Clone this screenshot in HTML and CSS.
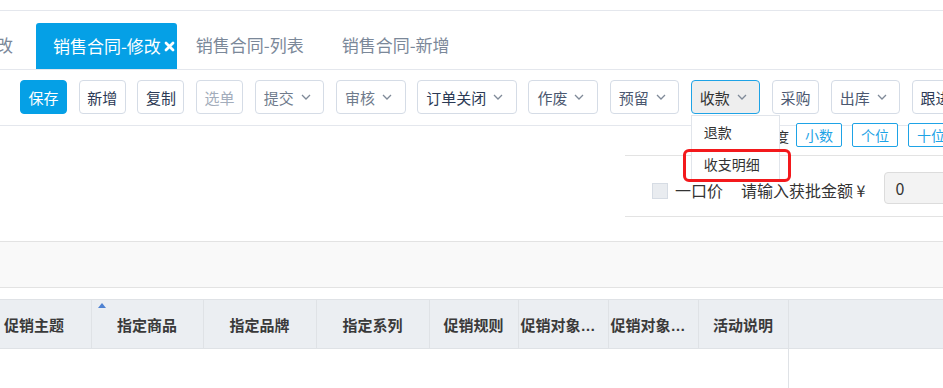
FILE: index.html
```html
<!DOCTYPE html>
<html>

<head>
  <title>销售合同-修改</title>
  <meta name="viewport" content="width=device-width, initial-scale=1">
  <link rel="stylesheet" href="styles.css">
</head>

<body>
  <div class="top-strip"></div>

  <div class="tabbar">
    <div class="tab tab-cut">销售合同-修改</div>
    <div class="tab active">销售合同-修改
      <svg class="tab-close" width="11" height="11" viewBox="0 0 11 11">
        <path d="M2 2L9 9M9 2L2 9" stroke="#fff" stroke-width="2.8" stroke-linecap="round" />
      </svg>
    </div>
    <div class="tab">销售合同-列表</div>
    <div class="tab">销售合同-新增</div>
  </div>

  <div class="toolbar">
    <button class="btn primary">保存</button>
    <button class="btn">新增</button>
    <button class="btn">复制</button>
    <button class="btn disabled">选单</button>
    <button class="btn drop muted">提交 <svg class="chev" width="10" height="6" viewBox="0 0 10 6"><path d="M1 1L5 5L9 1" /></svg></button>
    <button class="btn drop muted">审核 <svg class="chev" width="10" height="6" viewBox="0 0 10 6"><path d="M1 1L5 5L9 1" /></svg></button>
    <button class="btn drop">订单关闭 <svg class="chev" width="10" height="6" viewBox="0 0 10 6"><path d="M1 1L5 5L9 1" /></svg></button>
    <button class="btn drop soft">作废 <svg class="chev" width="10" height="6" viewBox="0 0 10 6"><path d="M1 1L5 5L9 1" /></svg></button>
    <button class="btn drop soft">预留 <svg class="chev" width="10" height="6" viewBox="0 0 10 6"><path d="M1 1L5 5L9 1" /></svg></button>
    <div class="drop-wrap">
      <button class="btn drop open">收款 <svg class="chev" width="10" height="6" viewBox="0 0 10 6"><path d="M1 1L5 5L9 1" /></svg></button>
      <div class="menu">
        <div class="menu-item">退款</div>
        <div class="menu-item">收支明细</div>
        <div class="highlight"></div>
      </div>
    </div>
    <button class="btn soft">采购</button>
    <button class="btn drop soft">出库 <svg class="chev" width="10" height="6" viewBox="0 0 10 6"><path d="M1 1L5 5L9 1" /></svg></button>
    <button class="btn">跟进</button>
  </div>

  <div class="options">
    <div class="precision">
      <span class="precision-label">保留精度</span>
      <button class="pbtn">小数</button>
      <button class="pbtn">个位</button>
      <button class="pbtn">十位</button>
    </div>
    <div class="price-row">
      <span class="checkbox"></span>
      <span class="check-label">一口价</span>
      <span class="amount-label">请输入获批金额 ¥</span>
      <div class="amount-input">0</div>
    </div>
  </div>

  <div class="grey-band"></div>

  <table class="grid">
    <colgroup>
      <col style="width: 91px">
      <col style="width: 112px">
      <col style="width: 113px">
      <col style="width: 113px">
      <col style="width: 89px">
      <col style="width: 90px">
      <col style="width: 90px">
      <col style="width: 90px">
      <col>
    </colgroup>
    <thead>
      <tr>
        <th class="left">促销主题</th>
        <th class="sorted">指定商品<span class="sort-up"></span></th>
        <th>指定品牌</th>
        <th>指定系列</th>
        <th>促销规则</th>
        <th class="left">促销对象类型</th>
        <th class="left">促销对象名称</th>
        <th>活动说明</th>
        <th class="filler"></th>
      </tr>
    </thead>
    <tbody>
      <tr>
        <td></td>
        <td></td>
        <td></td>
        <td></td>
        <td></td>
        <td></td>
        <td></td>
        <td class="edge"></td>
        <td></td>
      </tr>
    </tbody>
  </table>
</body>

</html>
```

FILE: styles.css
```css
html {
  font-family: "Noto Sans CJK SC", "Liberation Sans", sans-serif;
}

body {
  margin: 0;
  width: 943px;
  height: 388px;
  overflow: hidden;
  background-color: white;
}

.top-strip {
  height: 10px;
  border-bottom: 1px solid #e4e7ed;
}

/* tabs */
.tabbar {
  display: flex;
  align-items: flex-end;
  height: 58px;
  border-bottom: 1px solid #e4e7ed;
  margin-left: -114px;
  white-space: nowrap;
}

.tab {
  flex-shrink: 0;
  height: 46px;
  line-height: 44px;
  padding: 0 19px;
  font-size: 17px;
  color: #7b8899;
}

.tab-cut {
  padding-right: 21px;
}

.active {
  display: flex;
  align-items: center;
  gap: 3px;
  padding: 0 2px 0 17px;
  margin-left: 2px;
  border-radius: 3px 3px 0 0;
  background-color: #05a0e6;
  color: white;
}

.tab-close {
  margin-top: 1px;
}

/* toolbar */
.toolbar {
  display: flex;
  gap: 11.7px;
  height: 34px;
  padding: 10px 0 11px 20px;
  border-bottom: 1px solid #e4e7ed;
  white-space: nowrap;
}

.btn {
  display: flex;
  align-items: center;
  flex-shrink: 0;
  height: 34px;
  padding: 0 7.5px;
  border: 1px solid #d5dce6;
  border-radius: 4px;
  background-color: white;
  font-family: inherit;
  font-size: 15px;
  color: #2c3a55;
}

.btn.drop {
  gap: 7px;
  padding: 0 12.5px 0 8px;
}

.chev {
  fill: none;
  stroke: #7f8a98;
  stroke-width: 1.3;
}

.primary {
  border-color: #05a0e6;
  background-color: #05a0e6;
  color: white;
}

.disabled {
  color: #a3adbb;
}

.muted {
  color: #6f7b8c;
}

.soft {
  color: #4b5870;
}

.open {
  border-color: #1ea3e6;
  background-color: #eeeeee;
  color: #333;
}

.drop-wrap {
  position: relative;
  flex-shrink: 0;
}

.menu {
  position: absolute;
  top: 35px;
  left: 0;
  z-index: 5;
  width: 87px;
  border: 1px solid #e1e5eb;
  background-color: white;
}

.menu-item {
  height: 32px;
  line-height: 32px;
  padding-left: 12px;
  font-size: 14px;
  color: #333;
}

.highlight {
  position: absolute;
  top: 33px;
  left: -9px;
  width: 102px;
  height: 27px;
  border: 3px solid #f3191c;
  border-radius: 6px;
}

/* option panel */
.options {
  height: 115px;
  border-bottom: 1px solid #e3e3e3;
  white-space: nowrap;
}

.precision {
  display: flex;
  align-items: flex-start;
  gap: 10px;
  height: 29px;
  margin-left: 733px;
}

.precision-label {
  width: 56px;
  margin-right: -3px;
  font-size: 14px;
  line-height: 20px;
  color: #333;
}

.pbtn {
  flex-shrink: 0;
  width: 46px;
  height: 24px;
  margin-top: -3px;
  padding: 0;
  border: 1px solid #1ea3e6;
  border-radius: 2px;
  background-color: white;
  font-family: inherit;
  font-size: 14px;
  line-height: 20px;
  color: #1ea3e6;
}

.price-row {
  display: flex;
  align-items: center;
  height: 32px;
  margin-left: 625px;
  padding: 16px 0 12px 27px;
  border-top: 1px solid #e3e3e3;
  border-bottom: 1px solid #e3e3e3;
  font-size: 16px;
  color: #333;
}

.checkbox {
  flex-shrink: 0;
  width: 14px;
  height: 14px;
  margin-top: 6px;
  border: 1px solid #d6dce4;
  background-color: #e9ecf0;
}

.check-label {
  margin-left: 7px;
  margin-top: 4px;
}

.amount-label {
  margin-left: 18px;
  margin-top: 4px;
}

.amount-input {
  flex-shrink: 0;
  width: 80px;
  height: 30px;
  line-height: 30px;
  margin-left: 19px;
  padding-left: 10px;
  border: 1px solid #dcdcdc;
  border-radius: 4px;
  background-color: #f3f3f3;
  font-size: 16px;
}

.grey-band {
  height: 45px;
  margin-bottom: 11px;
  border-bottom: 1px solid #e3e3e3;
  background-color: #f9f9f9;
}

/* grid */
.grid {
  width: 943px;
  table-layout: fixed;
  border-collapse: collapse;
}

.grid th {
  position: relative;
  height: 48px;
  padding: 0 2px;
  border: 1px solid #dfe2e6;
  background-color: #ebeef2;
  font-family: "Liberation Sans", "Noto Sans CJK SC", sans-serif;
  font-size: 15px;
  font-weight: bold;
  color: #3a3a3a;
  text-align: center;
  white-space: nowrap;
  overflow: hidden;
  text-overflow: ellipsis;
}

.grid th.left {
  text-align: left;
}

.grid th:first-child {
  padding-left: 4px;
  border-left: none;
}

.grid th.filler {
  border-right: none;
}

.sort-up {
  position: absolute;
  top: 3px;
  left: 6px;
  border-left: 4px solid transparent;
  border-right: 4px solid transparent;
  border-bottom: 5px solid #4f82d2;
}

.grid td {
  height: 40px;
  padding: 0;
}

.grid td.edge {
  border-right: 1px solid #dfe2e6;
}
```
